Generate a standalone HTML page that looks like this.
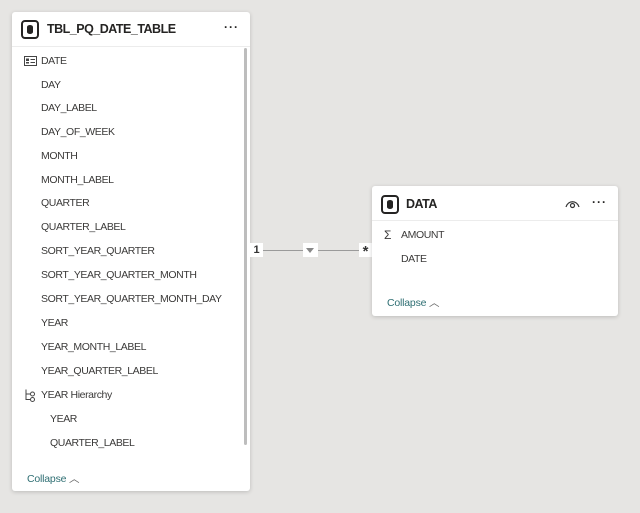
<!DOCTYPE html>
<html><head><meta charset="utf-8"><style>
body{margin:0;width:640px;height:513px;background:#e6e5e3;font-family:"Liberation Sans",sans-serif;position:relative;overflow:hidden;color:#333}
.card{position:absolute;background:#fff;border-radius:3px;box-shadow:0 1px 4px rgba(0,0,0,.18)}
.hdr{position:absolute;left:0;right:0;top:0;border-bottom:1px solid #ececec}
.title{position:absolute;font-size:12.5px;letter-spacing:-0.5px;font-weight:bold;color:#252423}
.ico{position:absolute;width:14px;height:15px;border:2px solid #252423;border-radius:4px}
.ico:after{content:"";position:absolute;left:4px;top:3px;width:6px;height:9px;background:#252423;border-radius:3px/2px}
.row{position:absolute;font-size:10.5px;letter-spacing:-0.4px;color:#3b3a39}
.dots{position:absolute;font-size:12px;font-weight:bold;letter-spacing:1px;color:#252423}
.coll{position:absolute;font-size:10.5px;letter-spacing:-0.2px;color:#2f6f73}
</style></head><body>

<div class="card" style="left:12px;top:12px;width:238px;height:479px">
 <div class="hdr" style="height:34px"></div>
 <div class="ico" style="left:9px;top:8px"></div>
 <div class="title" style="left:35px;top:10px">TBL_PQ_DATE_TABLE</div>
 <div class="dots" style="left:212px;top:8px">···</div>
 <div style="position:absolute;left:232px;top:36px;width:3px;height:397px;background:#bdbdbd;border-radius:2px"></div>
 <svg style="position:absolute;left:12px;top:44px" width="13" height="10"><rect x="0.5" y="0.5" width="12" height="9" fill="none" stroke="#444"/><rect x="2" y="2.5" width="3" height="2.5" fill="#444"/><rect x="2" y="6" width="3" height="1.5" fill="#444"/><line x1="6.5" y1="3.5" x2="11" y2="3.5" stroke="#444"/><line x1="6.5" y1="6.5" x2="11" y2="6.5" stroke="#444"/></svg>
 <div class="row" style="left:29px;top:43px">DATE</div>
 <div class="row" style="left:29px;top:67px">DAY</div>
 <div class="row" style="left:29px;top:90px">DAY_LABEL</div>
 <div class="row" style="left:29px;top:114px">DAY_OF_WEEK</div>
 <div class="row" style="left:29px;top:138px">MONTH</div>
 <div class="row" style="left:29px;top:162px">MONTH_LABEL</div>
 <div class="row" style="left:29px;top:185px">QUARTER</div>
 <div class="row" style="left:29px;top:209px">QUARTER_LABEL</div>
 <div class="row" style="left:29px;top:233px">SORT_YEAR_QUARTER</div>
 <div class="row" style="left:29px;top:257px">SORT_YEAR_QUARTER_MONTH</div>
 <div class="row" style="left:29px;top:281px">SORT_YEAR_QUARTER_MONTH_DAY</div>
 <div class="row" style="left:29px;top:305px">YEAR</div>
 <div class="row" style="left:29px;top:329px">YEAR_MONTH_LABEL</div>
 <div class="row" style="left:29px;top:353px">YEAR_QUARTER_LABEL</div>
 <svg style="position:absolute;left:12px;top:377px" width="12" height="13"><path d="M2 0.5V10.5H6M2 5H6" fill="none" stroke="#444"/><circle cx="8.5" cy="5" r="2" fill="none" stroke="#444"/><circle cx="8.5" cy="10.5" r="2" fill="none" stroke="#444"/></svg>
 <div class="row" style="left:29px;top:377px">YEAR Hierarchy</div>
 <div class="row" style="left:38px;top:401px">YEAR</div>
 <div class="row" style="left:38px;top:425px">QUARTER_LABEL</div>
 <div class="coll" style="left:15px;top:459px">Collapse <span style="color:#666">︿</span></div>
</div>

<div style="position:absolute;left:250px;top:250px;width:120px;height:1px;background:#9a9a9a"></div>
<div style="position:absolute;left:250px;top:243px;width:13px;height:14px;background:#fff;font-size:11px;font-weight:bold;text-align:center;line-height:14px">1</div>
<div style="position:absolute;left:303px;top:243px;width:15px;height:14px;background:#fff"><div style="position:absolute;left:3px;top:5px;border-left:4.5px solid transparent;border-right:4.5px solid transparent;border-top:5px solid #888"></div></div>
<div style="position:absolute;left:359px;top:243px;width:13px;height:14px;background:#fff;font-size:15px;font-weight:bold;text-align:center;line-height:17px">*</div>

<div class="card" style="left:372px;top:186px;width:246px;height:130px">
 <div class="hdr" style="height:34px"></div>
 <div class="ico" style="left:9px;top:9px"></div>
 <div class="title" style="left:34px;top:11px">DATA</div>
 <svg style="position:absolute;left:193px;top:13px" width="15" height="10"><path d="M1 8C3 1 12 1 14 8" fill="none" stroke="#333" stroke-width="1.2"/><circle cx="7.5" cy="6.5" r="2" fill="none" stroke="#333" stroke-width="1.2"/></svg>
 <div class="dots" style="left:220px;top:9px">···</div>
 <div class="row" style="left:12px;top:42px;font-size:12px">Σ</div>
 <div class="row" style="left:29px;top:43px">AMOUNT</div>
 <div class="row" style="left:29px;top:67px">DATE</div>
 <div class="coll" style="left:15px;top:109px">Collapse <span style="color:#666">︿</span></div>
</div>
</body></html>
